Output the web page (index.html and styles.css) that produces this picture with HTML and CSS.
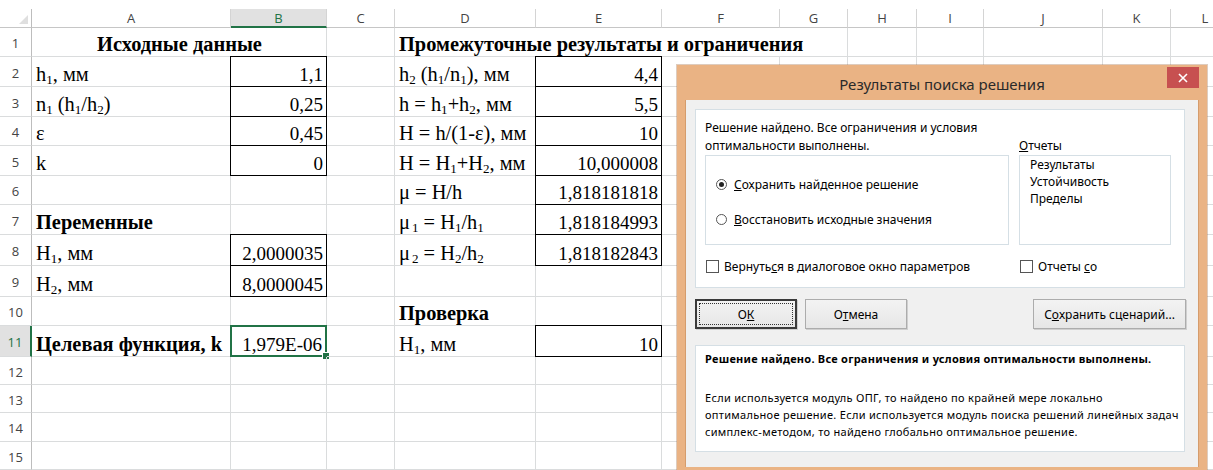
FILE: index.html
```html
<!DOCTYPE html>
<html lang="ru">
<head>
<meta charset="utf-8">
<title>Поиск решения</title>
<link rel="stylesheet" href="styles.css">
</head>
<body>
<div class="workbook">
  <div class="sheet">
    <!-- column headings -->
    <div class="corner"><span class="corner-tri"></span></div>
    <div class="hd">A</div>
    <div class="hd sel">B</div>
    <div class="hd">C</div>
    <div class="hd">D</div>
    <div class="hd">E</div>
    <div class="hd">F</div>
    <div class="hd">G</div>
    <div class="hd">H</div>
    <div class="hd">I</div>
    <div class="hd">J</div>
    <div class="hd">K</div>
    <div class="hd">L</div>

    <!-- 1 -->
    <div class="rh">1</div>
    <div class="span2 b center">Исходные данные</div>
    <div></div>
    <div class="span4 b">Промежуточные результаты и ограничения</div>
    <div></div><div></div><div></div><div></div><div></div>

    <!-- 2 -->
    <div class="rh">2</div>
    <div><span>h<sub>1</sub>, мм</span></div>
    <div class="box num">1,1</div>
    <div></div>
    <div><span>h<sub>2</sub> (h<sub>1</sub>/n<sub>1</sub>), мм</span></div>
    <div class="box num">4,4</div>
    <div></div><div></div><div></div><div></div><div></div><div></div><div></div>

    <!-- 3 -->
    <div class="rh">3</div>
    <div><span>n<sub>1</sub> (h<sub>1</sub>/h<sub>2</sub>)</span></div>
    <div class="box num">0,25</div>
    <div></div>
    <div><span>h = h<sub>1</sub>+h<sub>2</sub>, мм</span></div>
    <div class="box num">5,5</div>
    <div></div><div></div><div></div><div></div><div></div><div></div><div></div>

    <!-- 4 -->
    <div class="rh">4</div>
    <div>ε</div>
    <div class="box num">0,45</div>
    <div></div>
    <div>H = h/(1-ε), мм</div>
    <div class="box num">10</div>
    <div></div><div></div><div></div><div></div><div></div><div></div><div></div>

    <!-- 5 -->
    <div class="rh">5</div>
    <div>k</div>
    <div class="box num">0</div>
    <div></div>
    <div><span>H = H<sub>1</sub>+H<sub>2</sub>, мм</span></div>
    <div class="box num">10,000008</div>
    <div></div><div></div><div></div><div></div><div></div><div></div><div></div>

    <!-- 6 -->
    <div class="rh">6</div>
    <div></div>
    <div></div>
    <div></div>
    <div>μ = H/h</div>
    <div class="box num">1,818181818</div>
    <div></div><div></div><div></div><div></div><div></div><div></div><div></div>

    <!-- 7 -->
    <div class="rh">7</div>
    <div class="b">Переменные</div>
    <div></div>
    <div></div>
    <div><span>μ<sub class="wide-sub">1</sub> = H<sub>1</sub>/h<sub>1</sub></span></div>
    <div class="box num">1,818184993</div>
    <div></div><div></div><div></div><div></div><div></div><div></div><div></div>

    <!-- 8 -->
    <div class="rh">8</div>
    <div><span>H<sub>1</sub>, мм</span></div>
    <div class="box num">2,0000035</div>
    <div></div>
    <div><span>μ<sub class="wide-sub">2</sub> = H<sub>2</sub>/h<sub>2</sub></span></div>
    <div class="box num">1,818182843</div>
    <div></div><div></div><div></div><div></div><div></div><div></div><div></div>

    <!-- 9 -->
    <div class="rh">9</div>
    <div><span>H<sub>2</sub>, мм</span></div>
    <div class="box num">8,0000045</div>
    <div></div>
    <div></div>
    <div></div>
    <div></div><div></div><div></div><div></div><div></div><div></div><div></div>

    <!-- 10 -->
    <div class="rh">10</div>
    <div></div>
    <div></div>
    <div></div>
    <div class="b">Проверка</div>
    <div></div>
    <div></div><div></div><div></div><div></div><div></div><div></div><div></div>

    <!-- 11 -->
    <div class="rh sel">11</div>
    <div class="b">Целевая функция, k</div>
    <div class="active num">1,979E-06</div>
    <div></div>
    <div><span>H<sub>1</sub>, мм</span></div>
    <div class="box num">10</div>
    <div></div><div></div><div></div><div></div><div></div><div></div><div></div>

    <!-- 12 -->
    <div class="rh">12</div>
    <div></div><div></div><div></div><div></div><div></div><div></div><div></div><div></div><div></div><div></div><div></div><div></div>
    <!-- 13 -->
    <div class="rh">13</div>
    <div></div><div></div><div></div><div></div><div></div><div></div><div></div><div></div><div></div><div></div><div></div><div></div>
    <!-- 14 -->
    <div class="rh">14</div>
    <div></div><div></div><div></div><div></div><div></div><div></div><div></div><div></div><div></div><div></div><div></div><div></div>
    <!-- 15 -->
    <div class="rh">15</div>
    <div></div><div></div><div></div><div></div><div></div><div></div><div></div><div></div><div></div><div></div><div></div><div></div>
  </div>

  <!-- Solver results window -->
  <div class="dialog" role="dialog" aria-label="Результаты поиска решения">
    <div class="titlebar">
      <span class="title">Результаты поиска решения</span>
      <span class="close" aria-label="Закрыть">
        <svg width="10" height="10" viewBox="0 0 10 10"><path d="M1 1L9 9M9 1L1 9" stroke="#fff" stroke-width="1.6" fill="none"/></svg>
      </span>
    </div>
    <div class="dlg-body">
      <div class="panel result">
        <div class="msg">Решение найдено. Все ограничения и условия<br>оптимальности выполнены.</div>
        <div class="rep-label"><u>О</u>тчеты</div>
        <div class="radio-group">
          <div class="radio on"><span class="mark"></span><span><u>С</u>охранить найденное решение</span></div>
          <div class="radio"><span class="mark"></span><span><u>В</u>осстановить исходные значения</span></div>
        </div>
        <ul class="listbox">
          <li>Результаты</li>
          <li>Устойчивость</li>
          <li>Пределы</li>
        </ul>
        <div class="check"><span class="mark"></span><span>Вернуть<u>с</u>я в диалоговое окно параметров</span></div>
        <div class="check"><span class="mark"></span><span>Отчеты <u>с</u>о</span></div>
      </div>

      <div class="buttons">
        <span class="btn default"><span class="focus">О<u>К</u></span></span>
        <span class="btn">О<u>т</u>мена</span>
        <span class="grow"></span>
        <span class="btn wide">С<u>о</u>хранить сценарий...</span>
      </div>

      <div class="panel info">
        <p class="strong">Решение найдено. Все ограничения и условия оптимальности выполнены.</p>
        <p class="note">Если используется модуль ОПГ, то найдено по крайней мере локально<br>оптимальное решение. Если используется модуль поиска решений линейных задач<br>симплекс-методом, то найдено глобально оптимальное решение.</p>
      </div>
    </div>
  </div>
</div>
</body>
</html>
```

FILE: styles.css
```css
* { box-sizing: border-box; }

html, body {
  margin: 0;
  padding: 0;
  background: #fff;
}

body {
  overflow: hidden;
  font-family: "Liberation Serif", "Times New Roman", serif;
}

.workbook {
  position: relative;
  width: 1213px;
  height: 470px;
  overflow: hidden;
}

/* ---------- worksheet grid ---------- */
.sheet {
  display: grid;
  grid-template-columns: 32px 199px 96px 68px 141px 126px 118px 68px 69px 67px 119px 68px 69px;
  grid-template-rows: 19px 29px 30px 30px 29px 30px 29px 30px 31px 31px 29px 31px 28px 28px 29px 28px;
  width: 1240px;
  padding-top: 9px;
  font-size: 20.4px;
  color: #000;
}

.sheet > div {
  position: relative;
  display: flex;
  align-items: flex-end;
  min-width: 0;
  padding: 0 3px 0 4px;
  white-space: nowrap;
  line-height: 23px;
  border-right: 1px solid #dadcdd;
  border-bottom: 1px solid #dadcdd;
}

.sheet sub {
  font-size: 0.64em;
  line-height: 0;
  vertical-align: -0.22em;
}

.sheet sub.wide-sub { margin-left: 2px; }

.span2 { grid-column: span 2; }
.span4 { grid-column: span 4; }
.b { font-weight: bold; }
.center { justify-content: center; }

.sheet > .num {
  justify-content: flex-end;
  font-size: 19px;
  line-height: 22px;
}

/* bordered input/result cells */
.box::before {
  content: "";
  position: absolute;
  top: -1px;
  left: -1px;
  right: -1px;
  bottom: -1px;
  border: 1px solid #000;
  pointer-events: none;
}

/* active cell */
.sheet > .active {
  padding-right: 4px;
}
.active::before {
  content: "";
  position: absolute;
  top: -1px;
  left: -1px;
  right: -1px;
  bottom: -1px;
  border: 2px solid #217346;
  pointer-events: none;
}
.active::after {
  content: "";
  position: absolute;
  right: -4px;
  bottom: -4px;
  width: 6px;
  height: 6px;
  background: #217346;
  border: 1px solid #fff;
}

/* headings */
.sheet > .hd,
.sheet > .rh,
.sheet > .corner {
  font-family: "Open Sans", "Liberation Sans", sans-serif;
  font-size: 13px;
  line-height: 18px;
  color: #444;
  align-items: center;
  justify-content: center;
  padding: 0;
  border-right-color: #d4d4d4;
  border-bottom-color: #c6c6c6;
}

.sheet > .rh {
  border-right: 1px solid #bdbdbd;
  border-bottom-color: #dadcdd;
  padding-top: 2px;
}

.sheet > .hd.sel {
  background: #e1e1e1;
  color: #217346;
  border-bottom: 2px solid #217346;
}

.sheet > .rh.sel {
  background: #e1e1e1;
  color: #217346;
  border-right: 2px solid #217346;
}

.corner {
  border-right: 1px solid #bdbdbd !important;
}
.corner-tri {
  position: absolute;
  right: 3px;
  bottom: 3px;
  width: 0;
  height: 0;
  border-left: 9px solid transparent;
  border-bottom: 9px solid #dfdfdf;
}

/* ---------- Solver results window ---------- */
.dialog {
  position: absolute;
  left: 677px;
  top: 65px;
  width: 530px;
  height: 410px;
  background: #eab384;
  padding: 35px 8px 8px 8px;
  font-family: "Noto Sans", "Open Sans", sans-serif;
  font-size: 12px;
  color: #000;
  box-shadow: 0 0 0 1px rgba(160, 110, 70, 0.35);
}

.titlebar {
  position: absolute;
  left: 0;
  right: 0;
  top: 0;
  height: 35px;
  display: flex;
  align-items: center;
  justify-content: center;
}

.title {
  font-size: 15px;
  color: #2a2a2a;
  padding-top: 2px;
}

.close {
  position: absolute;
  top: 2px;
  right: 8px;
  width: 32px;
  height: 21px;
  background: #c75050;
  display: flex;
  align-items: center;
  justify-content: center;
}

.dlg-body {
  height: 100%;
  background: #f0f0f0;
  padding: 9px 13px 0 9px;
  border-left: 1px solid #d59c6c;
  border-right: 1px solid #d59c6c;
}

.panel {
  background: #fff;
  border: 1px solid #d5dfe5;
}

.panel.result {
  height: 179px;
  padding: 9px 0 0 9px;
  display: grid;
  grid-template-columns: 304px 152px;
  grid-template-rows: 36px 90px auto;
  column-gap: 10px;
}

.msg {
  line-height: 18px;
  align-self: end;
}

.rep-label {
  align-self: end;
  line-height: 18px;
}

.radio-group {
  border: 1px solid #d5dfe5;
  padding: 19px 0 0 10px;
}

.radio {
  display: flex;
  align-items: center;
  height: 18px;
  margin-bottom: 17px;
}

.radio .mark {
  width: 11px;
  height: 11px;
  border: 1px solid #555;
  border-radius: 50%;
  background: #fff;
  margin-right: 7px;
  position: relative;
  flex: none;
}

.radio.on .mark::after {
  content: "";
  position: absolute;
  left: 2px;
  top: 2px;
  width: 5px;
  height: 5px;
  border-radius: 50%;
  background: #222;
}

.listbox {
  list-style: none;
  margin: 0;
  border: 1px solid #d5dfe5;
  padding: 0 0 0 10px;
  line-height: 17px;
}

.check {
  display: flex;
  align-items: center;
  margin-top: 14px;
  height: 14px;
  margin-left: 1px;
}

.check .mark {
  width: 13px;
  height: 13px;
  border: 1px solid #555;
  background: #fff;
  margin-right: 5px;
  flex: none;
}

.buttons {
  display: flex;
  margin-top: 11px;
  height: 30px;
  gap: 8px;
}

.grow { flex: 1; }

.btn {
  width: 102px;
  height: 30px;
  display: flex;
  align-items: center;
  justify-content: center;
  background: linear-gradient(#f3f3f3, #e6e6e6);
  border: 1px solid #acacac;
  box-shadow: 1px 1px 0 #cfcfcf;
}

.btn.wide {
  width: 153px;
  margin-right: -1px;
}

.btn.default {
  border: 2px solid #3a3a3a;
  padding: 3px;
}

.btn .focus {
  width: 100%;
  height: 100%;
  display: flex;
  align-items: center;
  justify-content: center;
  outline: 1px dotted #333;
}

.panel.info {
  margin-top: 16px;
  height: 107px;
  padding: 4px 9px 0 9px;
  white-space: nowrap;
}

.panel.info p {
  margin: 0;
  line-height: 17px;
}

.panel.info .strong {
  font-weight: bold;
  font-size: 11px;
  letter-spacing: 0.25px;
}

.panel.info .note {
  margin-top: 22px;
  font-size: 11px;
  letter-spacing: 0.3px;
}
```
